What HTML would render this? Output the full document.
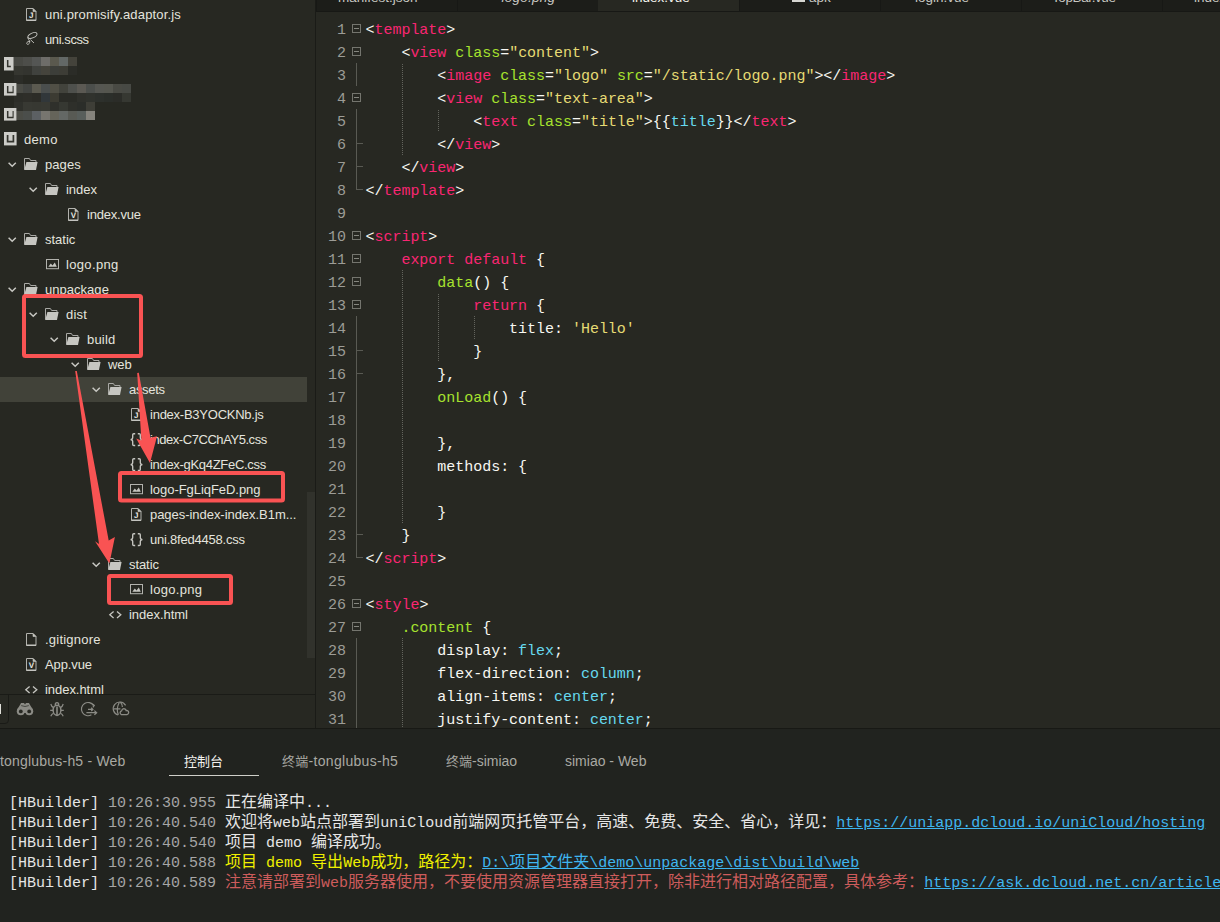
<!DOCTYPE html>
<html lang="zh"><head><meta charset="utf-8"><title>HBuilderX</title>
<style>
*{box-sizing:border-box;margin:0;padding:0}
html,body{width:1220px;height:922px;overflow:hidden;background:#272822}
body{position:relative;font-family:"Liberation Sans","Noto Sans CJK SC",sans-serif;color:#e6e6e0}
svg{position:absolute;overflow:visible}
#side{position:absolute;left:0;top:0;width:315px;height:695px;background:#272822;overflow:hidden}
#divider{position:absolute;left:315px;top:0;width:1px;height:728px;background:#1a1b17}
.row{position:absolute;left:0;width:307px;height:25px;line-height:25px;font-size:13px;color:#e4e4de;white-space:nowrap}
.row.sel{background:#414239}
.row .t{position:absolute;top:0}
#sb{position:absolute;left:307px;top:492px;width:8px;height:166px;background:#31322c}
#tabs{position:absolute;left:316px;top:0;width:904px;height:12px;background:#1c1d19;border-bottom:1px solid #171815;overflow:hidden}
.tab{position:absolute;top:0;height:11px;width:141px;border-left:1px solid #171815;font-size:13.5px;color:#c8c8c2;white-space:nowrap}
.tab span{position:absolute;top:-10px;line-height:16px}
.tab.act{background:#272822;height:12px;color:#f4f4ee;border-left:0}
#editor{position:absolute;left:316px;top:12px;width:904px;height:716px;background:#272822;overflow:hidden}
.ln{position:absolute;left:0;width:904px;height:23px;line-height:23px;font-family:"Liberation Mono",monospace;font-size:15px;color:#f8f8f2;white-space:pre}
.ln .n{position:absolute;left:0;top:2px;width:30px;text-align:right;color:#9c9c96}
.ln .c{position:absolute;left:49.5px;top:2px;letter-spacing:-0.025px}
.k{color:#f92672}.a{color:#a6e22e}.s{color:#e6db74}.b{color:#66d9ef}
.fb{position:absolute;left:36px;top:7px;width:9px;height:9px;border:1px solid #74756e}
.fb:after{content:"";position:absolute;left:1px;top:3px;width:5px;height:1px;background:#85867f}
.fl{position:absolute;left:40px;top:0;width:1px;height:23px;background:#595a53}
.fl.end{height:12px}
.ft{position:absolute;left:40px;top:11px;width:7px;height:1px;background:#595a53}
.ig{position:absolute;width:1px;background:repeating-linear-gradient(to bottom,#63645d 0,#63645d 1px,transparent 1px,transparent 2px)}
#toolbar{position:absolute;left:0;top:694px;width:315px;height:34px;background:#272822;border-top:1px solid #1a1b17}
#ltab{position:absolute;left:-2px;top:-1px;width:11px;height:30px;border:1px solid #1a1b17;border-radius:0 0 4px 0}
#console{position:absolute;left:0;top:728px;width:1220px;height:194px;background:#21231f;border-top:1px solid #181915;overflow:hidden}
.ct{position:absolute;top:22px;height:20px;line-height:20px;font-size:14px;color:#a9a9a3;white-space:nowrap}
.ct .z{font-size:13px}
.log{position:absolute;left:9px;height:20px;line-height:20px;font-family:"Liberation Mono","Noto Sans CJK SC",monospace;font-size:15px;color:#e6e6e6;white-space:pre}
.log .z{font-size:16px}
.log .d{color:#a6a6a6}
.log a{color:#3fb6f0;text-decoration:underline}
.mz{position:absolute;width:9px;height:9px}
</style></head><body>
<div id="side">
<div class="row" style="top:2px"><svg style="left:25.8px;top:6px" width="11" height="13" viewBox="0 0 11 13"><path d="M0.5,0.5H7L10,3.5V12.5H0.5Z" fill="none" stroke="#b2b2ad" stroke-width="1"/><path d="M7,0.5V3.5H10Z" fill="#c6c6c1" stroke="#c6c6c1" stroke-width="0.6"/><path d="M0.5,12.2H10" fill="none" stroke="#c6c6c1" stroke-width="1.4"/><text x="5.3" y="10.2" font-family="Liberation Sans,sans-serif" font-size="8" font-weight="bold" text-anchor="middle" fill="#e6e6e0" text-rendering="geometricPrecision">J</text></svg><span class="t" style="left:45px;letter-spacing:0.167px">uni.promisify.adaptor.js</span></div>
<div class="row" style="top:27px"><svg style="left:25.5px;top:5px" width="12" height="14" viewBox="0 0 12 14"><g fill="none" stroke="#c6c6c1" stroke-width="0.9"><ellipse cx="6.4" cy="3.5" rx="4.9" ry="2.4" transform="rotate(-24 6.4 3.5)"/><path d="M1.9,5.2C1.6,7.4 4.2,8.2 3.6,10.6C3.1,12.6 0.7,13 0.7,11.3C0.7,9.8 2.6,9.2 4.2,9.6M4.4,7.6L8,11"/></g></svg><span class="t" style="left:45px;letter-spacing:-0.409px">uni.scss</span></div>
<div class="row" style="top:52px"></div>
<div class="row" style="top:77px"></div>
<div class="row" style="top:102px"></div>
<div class="row" style="top:127px"><svg style="left:4px;top:5.2px" width="13" height="14" viewBox="0 0 13 14"><rect x="0" y="0" width="12.6" height="13.4" fill="#cdcdc9"/><path d="M3.6,3V9.6H9.4V3" fill="none" stroke="#34352f" stroke-width="1.7"/></svg><span class="t" style="left:24px;letter-spacing:0.292px">demo</span></div>
<div class="row" style="top:152px"><svg style="left:7.700000000000003px;top:10px" width="9" height="6" viewBox="0 0 9 6"><path d="M0.6,0.7L4.2,4.2L7.8,0.7" fill="none" stroke="#c8c8c3" stroke-width="1.5"/></svg><svg style="left:24px;top:6px" width="14" height="12" viewBox="0 0 14 12"><path d="M0.5,11.5V0.5H5.4L6.6,2.5H12V4.5" fill="none" stroke="#a9a9a5" stroke-width="1"/><path d="M2.4,4H13.6L12,12H0.2Z" fill="#c6c6c1"/></svg><span class="t" style="left:45px;letter-spacing:0.076px">pages</span></div>
<div class="row" style="top:177px"><svg style="left:28.700000000000003px;top:10px" width="9" height="6" viewBox="0 0 9 6"><path d="M0.6,0.7L4.2,4.2L7.8,0.7" fill="none" stroke="#c8c8c3" stroke-width="1.5"/></svg><svg style="left:45px;top:6px" width="14" height="12" viewBox="0 0 14 12"><path d="M0.5,11.5V0.5H5.4L6.6,2.5H12V4.5" fill="none" stroke="#a9a9a5" stroke-width="1"/><path d="M2.4,4H13.6L12,12H0.2Z" fill="#c6c6c1"/></svg><span class="t" style="left:66px;letter-spacing:-0.016px">index</span></div>
<div class="row" style="top:202px"><svg style="left:67.8px;top:6px" width="11" height="13" viewBox="0 0 11 13"><path d="M0.5,0.5H7L10,3.5V12.5H0.5Z" fill="none" stroke="#b2b2ad" stroke-width="1"/><path d="M7,0.5V3.5H10Z" fill="#c6c6c1" stroke="#c6c6c1" stroke-width="0.6"/><path d="M0.5,12.2H10" fill="none" stroke="#c6c6c1" stroke-width="1.4"/><text x="5.3" y="10.2" font-family="Liberation Sans,sans-serif" font-size="8" font-weight="bold" text-anchor="middle" fill="#e6e6e0" text-rendering="geometricPrecision">V</text></svg><span class="t" style="left:87px;letter-spacing:-0.195px">index.vue</span></div>
<div class="row" style="top:227px"><svg style="left:7.700000000000003px;top:10px" width="9" height="6" viewBox="0 0 9 6"><path d="M0.6,0.7L4.2,4.2L7.8,0.7" fill="none" stroke="#c8c8c3" stroke-width="1.5"/></svg><svg style="left:24px;top:6px" width="14" height="12" viewBox="0 0 14 12"><path d="M0.5,11.5V0.5H5.4L6.6,2.5H12V4.5" fill="none" stroke="#a9a9a5" stroke-width="1"/><path d="M2.4,4H13.6L12,12H0.2Z" fill="#c6c6c1"/></svg><span class="t" style="left:45px;letter-spacing:-0.007px">static</span></div>
<div class="row" style="top:252px"><svg style="left:45.6px;top:6.8px" width="13" height="11" viewBox="0 0 13 11"><rect x="0.5" y="0.5" width="12" height="9.2" fill="none" stroke="#b2b2ad" stroke-width="1"/><path d="M2.3,7.8L4.8,4.6L6.5,6.4L8.8,3.6L10.8,7.8Z" fill="#c6c6c1"/></svg><span class="t" style="left:66px;letter-spacing:0.339px">logo.png</span></div>
<div class="row" style="top:277px"><svg style="left:7.700000000000003px;top:10px" width="9" height="6" viewBox="0 0 9 6"><path d="M0.6,0.7L4.2,4.2L7.8,0.7" fill="none" stroke="#c8c8c3" stroke-width="1.5"/></svg><svg style="left:24px;top:6px" width="14" height="12" viewBox="0 0 14 12"><path d="M0.5,11.5V0.5H5.4L6.6,2.5H12V4.5" fill="none" stroke="#a9a9a5" stroke-width="1"/><path d="M2.4,4H13.6L12,12H0.2Z" fill="#c6c6c1"/></svg><span class="t" style="left:45px;letter-spacing:0.031px">unpackage</span></div>
<div class="row" style="top:302px"><svg style="left:28.700000000000003px;top:10px" width="9" height="6" viewBox="0 0 9 6"><path d="M0.6,0.7L4.2,4.2L7.8,0.7" fill="none" stroke="#c8c8c3" stroke-width="1.5"/></svg><svg style="left:45px;top:6px" width="14" height="12" viewBox="0 0 14 12"><path d="M0.5,11.5V0.5H5.4L6.6,2.5H12V4.5" fill="none" stroke="#a9a9a5" stroke-width="1"/><path d="M2.4,4H13.6L12,12H0.2Z" fill="#c6c6c1"/></svg><span class="t" style="left:66px;letter-spacing:0.216px">dist</span></div>
<div class="row" style="top:327px"><svg style="left:49.7px;top:10px" width="9" height="6" viewBox="0 0 9 6"><path d="M0.6,0.7L4.2,4.2L7.8,0.7" fill="none" stroke="#c8c8c3" stroke-width="1.5"/></svg><svg style="left:66px;top:6px" width="14" height="12" viewBox="0 0 14 12"><path d="M0.5,11.5V0.5H5.4L6.6,2.5H12V4.5" fill="none" stroke="#a9a9a5" stroke-width="1"/><path d="M2.4,4H13.6L12,12H0.2Z" fill="#c6c6c1"/></svg><span class="t" style="left:87px;letter-spacing:0.186px">build</span></div>
<div class="row" style="top:352px"><svg style="left:70.7px;top:10px" width="9" height="6" viewBox="0 0 9 6"><path d="M0.6,0.7L4.2,4.2L7.8,0.7" fill="none" stroke="#c8c8c3" stroke-width="1.5"/></svg><svg style="left:87px;top:6px" width="14" height="12" viewBox="0 0 14 12"><path d="M0.5,11.5V0.5H5.4L6.6,2.5H12V4.5" fill="none" stroke="#a9a9a5" stroke-width="1"/><path d="M2.4,4H13.6L12,12H0.2Z" fill="#c6c6c1"/></svg><span class="t" style="left:108px;letter-spacing:-0.053px">web</span></div>
<div class="row sel" style="top:377px"><svg style="left:91.7px;top:10px" width="9" height="6" viewBox="0 0 9 6"><path d="M0.6,0.7L4.2,4.2L7.8,0.7" fill="none" stroke="#c8c8c3" stroke-width="1.5"/></svg><svg style="left:108px;top:6px" width="14" height="12" viewBox="0 0 14 12"><path d="M0.5,11.5V0.5H5.4L6.6,2.5H12V4.5" fill="none" stroke="#a9a9a5" stroke-width="1"/><path d="M2.4,4H13.6L12,12H0.2Z" fill="#c6c6c1"/></svg><span class="t" style="left:129px;letter-spacing:-0.313px">assets</span></div>
<div class="row" style="top:402px"><svg style="left:130.8px;top:6px" width="11" height="13" viewBox="0 0 11 13"><path d="M0.5,0.5H7L10,3.5V12.5H0.5Z" fill="none" stroke="#b2b2ad" stroke-width="1"/><path d="M7,0.5V3.5H10Z" fill="#c6c6c1" stroke="#c6c6c1" stroke-width="0.6"/><path d="M0.5,12.2H10" fill="none" stroke="#c6c6c1" stroke-width="1.4"/><text x="5.3" y="10.2" font-family="Liberation Sans,sans-serif" font-size="8" font-weight="bold" text-anchor="middle" fill="#e6e6e0" text-rendering="geometricPrecision">J</text></svg><span class="t" style="left:150px;letter-spacing:-0.246px">index-B3YOCKNb.js</span></div>
<div class="row" style="top:427px"><svg style="left:129.6px;top:5.8px" width="13" height="14" viewBox="0 0 13 14"><path d="M5.2,0.7H3.8Q2.7,0.7 2.7,1.8V4.6Q2.7,6.4 0.6,6.6Q2.7,6.8 2.7,8.6V11.4Q2.7,12.5 3.8,12.5H5.2" fill="none" stroke="#c6c6c1" stroke-width="1.35"/><path d="M7.8,0.7H9.2Q10.3,0.7 10.3,1.8V4.6Q10.3,6.4 12.4,6.6Q10.3,6.8 10.3,8.6V11.4Q10.3,12.5 9.2,12.5H7.8" fill="none" stroke="#c6c6c1" stroke-width="1.35"/></svg><span class="t" style="left:150px;letter-spacing:-0.443px">index-C7CChAY5.css</span></div>
<div class="row" style="top:452px"><svg style="left:129.6px;top:5.8px" width="13" height="14" viewBox="0 0 13 14"><path d="M5.2,0.7H3.8Q2.7,0.7 2.7,1.8V4.6Q2.7,6.4 0.6,6.6Q2.7,6.8 2.7,8.6V11.4Q2.7,12.5 3.8,12.5H5.2" fill="none" stroke="#c6c6c1" stroke-width="1.35"/><path d="M7.8,0.7H9.2Q10.3,0.7 10.3,1.8V4.6Q10.3,6.4 12.4,6.6Q10.3,6.8 10.3,8.6V11.4Q10.3,12.5 9.2,12.5H7.8" fill="none" stroke="#c6c6c1" stroke-width="1.35"/></svg><span class="t" style="left:150px;letter-spacing:-0.305px">index-gKq4ZFeC.css</span></div>
<div class="row" style="top:477px"><svg style="left:129.6px;top:6.8px" width="13" height="11" viewBox="0 0 13 11"><rect x="0.5" y="0.5" width="12" height="9.2" fill="none" stroke="#b2b2ad" stroke-width="1"/><path d="M2.3,7.8L4.8,4.6L6.5,6.4L8.8,3.6L10.8,7.8Z" fill="#c6c6c1"/></svg><span class="t" style="left:150px;letter-spacing:-0.047px">logo-FgLiqFeD.png</span></div>
<div class="row" style="top:502px"><svg style="left:130.8px;top:6px" width="11" height="13" viewBox="0 0 11 13"><path d="M0.5,0.5H7L10,3.5V12.5H0.5Z" fill="none" stroke="#b2b2ad" stroke-width="1"/><path d="M7,0.5V3.5H10Z" fill="#c6c6c1" stroke="#c6c6c1" stroke-width="0.6"/><path d="M0.5,12.2H10" fill="none" stroke="#c6c6c1" stroke-width="1.4"/><text x="5.3" y="10.2" font-family="Liberation Sans,sans-serif" font-size="8" font-weight="bold" text-anchor="middle" fill="#e6e6e0" text-rendering="geometricPrecision">J</text></svg><span class="t" style="left:150px;letter-spacing:-0.043px">pages-index-index.B1m...</span></div>
<div class="row" style="top:527px"><svg style="left:129.6px;top:5.8px" width="13" height="14" viewBox="0 0 13 14"><path d="M5.2,0.7H3.8Q2.7,0.7 2.7,1.8V4.6Q2.7,6.4 0.6,6.6Q2.7,6.8 2.7,8.6V11.4Q2.7,12.5 3.8,12.5H5.2" fill="none" stroke="#c6c6c1" stroke-width="1.35"/><path d="M7.8,0.7H9.2Q10.3,0.7 10.3,1.8V4.6Q10.3,6.4 12.4,6.6Q10.3,6.8 10.3,8.6V11.4Q10.3,12.5 9.2,12.5H7.8" fill="none" stroke="#c6c6c1" stroke-width="1.35"/></svg><span class="t" style="left:150px;letter-spacing:-0.219px">uni.8fed4458.css</span></div>
<div class="row" style="top:552px"><svg style="left:91.7px;top:10px" width="9" height="6" viewBox="0 0 9 6"><path d="M0.6,0.7L4.2,4.2L7.8,0.7" fill="none" stroke="#c8c8c3" stroke-width="1.5"/></svg><svg style="left:108px;top:6px" width="14" height="12" viewBox="0 0 14 12"><path d="M0.5,11.5V0.5H5.4L6.6,2.5H12V4.5" fill="none" stroke="#a9a9a5" stroke-width="1"/><path d="M2.4,4H13.6L12,12H0.2Z" fill="#c6c6c1"/></svg><span class="t" style="left:129px;letter-spacing:-0.074px">static</span></div>
<div class="row" style="top:577px"><svg style="left:129.6px;top:6.8px" width="13" height="11" viewBox="0 0 13 11"><rect x="0.5" y="0.5" width="12" height="9.2" fill="none" stroke="#b2b2ad" stroke-width="1"/><path d="M2.3,7.8L4.8,4.6L6.5,6.4L8.8,3.6L10.8,7.8Z" fill="#c6c6c1"/></svg><span class="t" style="left:150px;letter-spacing:0.301px">logo.png</span></div>
<div class="row" style="top:602px"><svg style="left:108.6px;top:9px" width="13" height="8" viewBox="0 0 13 8"><path d="M4.6,0.6L0.8,3.8L4.6,7" fill="none" stroke="#c6c6c1" stroke-width="1.3"/><path d="M8,0.6L11.8,3.8L8,7" fill="none" stroke="#c6c6c1" stroke-width="1.3"/></svg><span class="t" style="left:129px;letter-spacing:-0.035px">index.html</span></div>
<div class="row" style="top:627px"><svg style="left:25.8px;top:6px" width="11" height="13" viewBox="0 0 11 13"><path d="M0.5,0.5H7L10,3.5V12.5H0.5Z" fill="none" stroke="#b2b2ad" stroke-width="1"/><path d="M7,0.5V3.5H10Z" fill="#c6c6c1" stroke="#c6c6c1" stroke-width="0.6"/><path d="M0.5,12.2H10" fill="none" stroke="#c6c6c1" stroke-width="1.4"/></svg><span class="t" style="left:45px;letter-spacing:0.222px">.gitignore</span></div>
<div class="row" style="top:652px"><svg style="left:25.8px;top:6px" width="11" height="13" viewBox="0 0 11 13"><path d="M0.5,0.5H7L10,3.5V12.5H0.5Z" fill="none" stroke="#b2b2ad" stroke-width="1"/><path d="M7,0.5V3.5H10Z" fill="#c6c6c1" stroke="#c6c6c1" stroke-width="0.6"/><path d="M0.5,12.2H10" fill="none" stroke="#c6c6c1" stroke-width="1.4"/><text x="5.3" y="10.2" font-family="Liberation Sans,sans-serif" font-size="8" font-weight="bold" text-anchor="middle" fill="#e6e6e0" text-rendering="geometricPrecision">V</text></svg><span class="t" style="left:45px;letter-spacing:-0.115px">App.vue</span></div>
<div class="row" style="top:677px"><svg style="left:24.6px;top:9px" width="13" height="8" viewBox="0 0 13 8"><path d="M4.6,0.6L0.8,3.8L4.6,7" fill="none" stroke="#c6c6c1" stroke-width="1.3"/><path d="M8,0.6L11.8,3.8L8,7" fill="none" stroke="#c6c6c1" stroke-width="1.3"/></svg><span class="t" style="left:45px;letter-spacing:-0.045px">index.html</span></div>
<div class="mz" style="left:14px;top:57px;background:#484944"></div><div class="mz" style="left:23px;top:57px;background:#4d4e4a"></div><div class="mz" style="left:32px;top:57px;background:#545654"></div><div class="mz" style="left:41px;top:57px;background:#6e6d69"></div><div class="mz" style="left:50px;top:57px;background:#5a594e"></div><div class="mz" style="left:59px;top:57px;background:#636866"></div><div class="mz" style="left:68px;top:57px;background:#44433b"></div><div class="mz" style="left:14px;top:66px;background:#353630"></div><div class="mz" style="left:23px;top:66px;background:#33342f"></div><div class="mz" style="left:32px;top:66px;background:#40423e"></div><div class="mz" style="left:41px;top:66px;background:#45443c"></div><div class="mz" style="left:50px;top:66px;background:#3c3e39"></div><div class="mz" style="left:59px;top:66px;background:#3d3d36"></div><div class="mz" style="left:68px;top:66px;background:#2b2c27"></div><div class="mz" style="left:14px;top:75px;background:#2b2c27"></div><div class="mz" style="left:14px;top:84px;background:#4a4b45"></div><div class="mz" style="left:23px;top:84px;background:#424441"></div><div class="mz" style="left:32px;top:84px;background:#5b5a50"></div><div class="mz" style="left:41px;top:84px;background:#4a4e4d"></div><div class="mz" style="left:50px;top:84px;background:#504f45"></div><div class="mz" style="left:59px;top:84px;background:#42433c"></div><div class="mz" style="left:68px;top:84px;background:#4e504c"></div><div class="mz" style="left:77px;top:84px;background:#5b5953"></div><div class="mz" style="left:86px;top:84px;background:#4b4e4b"></div><div class="mz" style="left:95px;top:84px;background:#555651"></div><div class="mz" style="left:104px;top:84px;background:#55564f"></div><div class="mz" style="left:113px;top:84px;background:#494a44"></div><div class="mz" style="left:122px;top:84px;background:#474944"></div><div class="mz" style="left:14px;top:93px;background:#2c2d28"></div><div class="mz" style="left:23px;top:93px;background:#2e2e29"></div><div class="mz" style="left:32px;top:93px;background:#2c2c27"></div><div class="mz" style="left:41px;top:93px;background:#31373a"></div><div class="mz" style="left:50px;top:93px;background:#3c3b32"></div><div class="mz" style="left:59px;top:93px;background:#2a2b26"></div><div class="mz" style="left:68px;top:93px;background:#2a2b26"></div><div class="mz" style="left:77px;top:93px;background:#2f302b"></div><div class="mz" style="left:86px;top:93px;background:#30322d"></div><div class="mz" style="left:95px;top:93px;background:#2d302c"></div><div class="mz" style="left:104px;top:93px;background:#2b2e2a"></div><div class="mz" style="left:113px;top:93px;background:#2b2c28"></div><div class="mz" style="left:122px;top:93px;background:#363832"></div><div class="mz" style="left:14px;top:102px;background:#2f302b"></div><div class="mz" style="left:23px;top:102px;background:#383933"></div><div class="mz" style="left:32px;top:102px;background:#373832"></div><div class="mz" style="left:41px;top:102px;background:#383933"></div><div class="mz" style="left:50px;top:102px;background:#2f302b"></div><div class="mz" style="left:59px;top:102px;background:#363832"></div><div class="mz" style="left:68px;top:102px;background:#2e2f2a"></div><div class="mz" style="left:77px;top:102px;background:#2b2d29"></div><div class="mz" style="left:86px;top:102px;background:#3e3e37"></div><div class="mz" style="left:14px;top:111px;background:#4b4c46"></div><div class="mz" style="left:23px;top:111px;background:#4b4e4b"></div><div class="mz" style="left:32px;top:111px;background:#5c6063"></div><div class="mz" style="left:41px;top:111px;background:#77756f"></div><div class="mz" style="left:50px;top:111px;background:#65645a"></div><div class="mz" style="left:59px;top:111px;background:#646865"></div><div class="mz" style="left:68px;top:111px;background:#585a54"></div><div class="mz" style="left:77px;top:111px;background:#585e5b"></div><div class="mz" style="left:86px;top:111px;background:#85837c"></div><svg style="left:4px;top:57px" width="13" height="14" viewBox="0 0 13 14"><rect width="9.6" height="13.5" fill="#cdcdc9"/><path d="M3.6,3V9.6H9.4V3" fill="none" stroke="#34352f" stroke-width="1.7" clip-path="inset(0 3.4000000000000004px 0 0)"/></svg><svg style="left:4px;top:83px" width="13" height="14" viewBox="0 0 13 14"><rect width="12.4" height="12.6" fill="#cdcdc9"/><path d="M3.6,3V9.6H9.4V3" fill="none" stroke="#34352f" stroke-width="1.7" clip-path="inset(0 0.5999999999999996px 0 0)"/></svg><svg style="left:4px;top:108px" width="13" height="14" viewBox="0 0 13 14"><rect width="12.4" height="12.6" fill="#cdcdc9"/><path d="M3.6,3V9.6H9.4V3" fill="none" stroke="#34352f" stroke-width="1.7" clip-path="inset(0 0.5999999999999996px 0 0)"/></svg>
<div id="sb"></div>
</div>
<div id="toolbar"><div id="ltab"></div><i style="position:absolute;left:0;top:9px;width:1px;height:10px;background:#e0e0da"></i></div>
<svg style="left:0;top:0" width="315" height="728" viewBox="0 0 315 728"><g fill="#8b8b85"><circle cx="20.8" cy="711.3" r="4"/><circle cx="29.2" cy="711.3" r="4"/><path d="M17.2,709.6L20.4,704.2L21,703H24L25,704.4L26,703H29L29.6,704.2L32.8,709.6L29,713H21Z"/></g><circle cx="20.8" cy="711.4" r="1.9" fill="#272822"/><circle cx="29.2" cy="711.4" r="1.9" fill="#272822"/><path d="M24.3,713.2H25.7V715.4H24.3Z" fill="#272822"/><path d="M21.2,705.6Q25,707.4 28.8,705.6" fill="none" stroke="#272822" stroke-width="0.7"/><g fill="none" stroke="#8b8b85" stroke-width="1.5"><ellipse cx="57" cy="710.3" rx="3.9" ry="5.1"/><path d="M57,706.4V715.2" stroke-width="1.6"/><path d="M55.2,705.2Q55.2,702.6 57,702.6Q58.8,702.6 58.8,705.2" stroke-width="1.3"/><path d="M53.6,707.6Q51.4,706.6 50.8,704M60.4,707.6Q62.6,706.6 63.2,704M53.1,710.4H50.2M60.9,710.4H63.8M53.6,713.2Q51.6,714 50.8,716.2M60.4,713.2Q62.4,714 63.2,716.2" stroke-width="1.2"/></g><g fill="none" stroke="#8b8b85" stroke-width="1.2"><path d="M93.6,705.6A6.6,6.6 0 1 0 91.4,714.8"/><path d="M92.4,703.9L94.3,705.4L92.9,707.4"/><path d="M88,709.4H92.8M91.2,707.8L92.9,709.4L91.2,711"/><path d="M86.4,712.7H96.4M94.4,710.6L96.7,712.7L94.4,714.8"/></g><g fill="none" stroke="#8b8b85" stroke-width="1.2"><path d="M125.6,705.4A6.6,6.6 0 1 0 118.2,715"/><path d="M113.4,708.8H120.4M119.4,702.2Q115.8,708.6 118.4,714.8M120.4,702.2Q122.2,704.2 122.4,707"/><path d="M121.4,714.6H127A2.1,2.1 0 0 0 127.4,710.6Q126.6,710.4 126.2,710.6Q125.4,708.6 123.8,708.6Q122,708.8 121.6,710.8A2,2 0 0 0 121.4,714.6Z" fill="#272822" stroke-width="1.3"/></g></svg>
<svg style="left:0;top:0" width="315" height="700" viewBox="0 0 315 700"><rect x="24" y="296" width="117" height="60" rx="1.5" fill="none" stroke="#f95353" stroke-width="4"/><rect x="120" y="473" width="163" height="27.5" rx="1.5" fill="none" stroke="#f95353" stroke-width="4"/><rect x="109" y="576" width="122" height="27" rx="1.5" fill="none" stroke="#f95353" stroke-width="4"/><polygon points="137.2,372.9 141.4,440.5 136.2,438.4 150,463 157,436.2 150.5,437.7 138.8,372.7" fill="#f95353"/><polygon points="75.2,371.1 99,544 95,541.3 109.4,563.4 114.9,536.9 108.7,540.5 76.8,370.9" fill="#f95353"/></svg>
<div id="divider"></div>
<div id="tabs">
<div class="tab" style="left:0px"><span style="left:21px">manifest.json</span></div>
<div class="tab" style="left:141px"><span style="left:43.5px;font-style:italic;letter-spacing:0.25px">logo.png</span></div>
<div class="tab act" style="left:282px"><span style="left:34px">index.vue</span></div>
<div class="tab" style="left:423px"><i style="position:absolute;left:52px;top:-11px;width:13px;height:13px;background:#d6d6d2"></i><span style="left:69px">apk</span></div>
<div class="tab" style="left:564px"><span style="left:34px">login.vue</span></div>
<div class="tab" style="left:705px"><span style="left:30px;letter-spacing:-0.4px">TopBar.vue</span></div>
<div class="tab" style="left:846px"><span style="left:31px">index.vue</span></div>
</div>
<div id="editor">
<div class="ln" style="top:5px"><i class="fb"></i><span class="n">1</span><span class="c">&lt;<span class="k">template</span>&gt;</span></div>
<div class="ln" style="top:28px"><i class="fb"></i><span class="n">2</span><span class="c">    &lt;<span class="k">view</span> <span class="a">class</span>=<span class="s">"content"</span>&gt;</span></div>
<div class="ln" style="top:51px"><i class="fl"></i><span class="n">3</span><span class="c">        &lt;<span class="k">image</span> <span class="a">class</span>=<span class="s">"logo"</span> <span class="a">src</span>=<span class="s">"/static/logo.png"</span>&gt;&lt;/<span class="k">image</span>&gt;</span></div>
<div class="ln" style="top:74px"><i class="fb"></i><span class="n">4</span><span class="c">        &lt;<span class="k">view</span> <span class="a">class</span>=<span class="s">"text-area"</span>&gt;</span></div>
<div class="ln" style="top:97px"><i class="fl"></i><span class="n">5</span><span class="c">            &lt;<span class="k">text</span> <span class="a">class</span>=<span class="s">"title"</span>&gt;{{<span class="b">title</span>}}&lt;/<span class="k">text</span>&gt;</span></div>
<div class="ln" style="top:120px"><i class="fl"></i><i class="ft"></i><span class="n">6</span><span class="c">        &lt;/<span class="k">view</span>&gt;</span></div>
<div class="ln" style="top:143px"><i class="fl"></i><i class="ft"></i><span class="n">7</span><span class="c">    &lt;/<span class="k">view</span>&gt;</span></div>
<div class="ln" style="top:166px"><i class="fl end"></i><i class="ft"></i><span class="n">8</span><span class="c">&lt;/<span class="k">template</span>&gt;</span></div>
<div class="ln" style="top:189px"><span class="n">9</span><span class="c"></span></div>
<div class="ln" style="top:212px"><i class="fb"></i><span class="n">10</span><span class="c">&lt;<span class="k">script</span>&gt;</span></div>
<div class="ln" style="top:235px"><i class="fb"></i><span class="n">11</span><span class="c">    <span class="k">export</span> <span class="k">default</span> {</span></div>
<div class="ln" style="top:258px"><i class="fb"></i><span class="n">12</span><span class="c">        <span class="a">data</span>() {</span></div>
<div class="ln" style="top:281px"><i class="fb"></i><span class="n">13</span><span class="c">            <span class="k">return</span> {</span></div>
<div class="ln" style="top:304px"><i class="fl"></i><span class="n">14</span><span class="c">                title: <span class="s">'Hello'</span></span></div>
<div class="ln" style="top:327px"><i class="fl"></i><i class="ft"></i><span class="n">15</span><span class="c">            }</span></div>
<div class="ln" style="top:350px"><i class="fl"></i><i class="ft"></i><span class="n">16</span><span class="c">        },</span></div>
<div class="ln" style="top:373px"><i class="fl"></i><span class="n">17</span><span class="c">        <span class="a">onLoad</span>() {</span></div>
<div class="ln" style="top:396px"><i class="fl"></i><span class="n">18</span><span class="c"></span></div>
<div class="ln" style="top:419px"><i class="fl"></i><span class="n">19</span><span class="c">        },</span></div>
<div class="ln" style="top:442px"><i class="fl"></i><span class="n">20</span><span class="c">        methods: {</span></div>
<div class="ln" style="top:465px"><i class="fl"></i><span class="n">21</span><span class="c"></span></div>
<div class="ln" style="top:488px"><i class="fl"></i><span class="n">22</span><span class="c">        }</span></div>
<div class="ln" style="top:511px"><i class="fl"></i><i class="ft"></i><span class="n">23</span><span class="c">    }</span></div>
<div class="ln" style="top:534px"><i class="fl end"></i><i class="ft"></i><span class="n">24</span><span class="c">&lt;/<span class="k">script</span>&gt;</span></div>
<div class="ln" style="top:557px"><span class="n">25</span><span class="c"></span></div>
<div class="ln" style="top:580px"><i class="fb"></i><span class="n">26</span><span class="c">&lt;<span class="k">style</span>&gt;</span></div>
<div class="ln" style="top:603px"><i class="fb"></i><span class="n">27</span><span class="c">    <span class="a">.content</span> {</span></div>
<div class="ln" style="top:626px"><i class="fl"></i><span class="n">28</span><span class="c">        display: <span class="b">flex</span>;</span></div>
<div class="ln" style="top:649px"><i class="fl"></i><span class="n">29</span><span class="c">        flex-direction: <span class="b">column</span>;</span></div>
<div class="ln" style="top:672px"><i class="fl"></i><span class="n">30</span><span class="c">        align-items: <span class="b">center</span>;</span></div>
<div class="ln" style="top:695px"><i class="fl"></i><span class="n">31</span><span class="c">        justify-content: <span class="b">center</span>;</span></div>
<i class="ig" style="left:86px;top:52px;height:91px"></i>
<i class="ig" style="left:86px;top:258px;height:253px"></i>
<i class="ig" style="left:86px;top:626px;height:92px"></i>
<i class="ig" style="left:122px;top:98px;height:22px"></i>
<i class="ig" style="left:122px;top:282px;height:68px"></i>
<i class="ig" style="left:158px;top:304px;height:23px"></i>
</div>
<div id="console">
<div class="ct" style="left:0px;letter-spacing:0.2px">tonglubus-h5 - Web</div>
<div class="ct" style="left:184px;letter-spacing:0px;color:#f2f2ee"><span class="z">控制台</span></div>
<div class="ct" style="left:282px;letter-spacing:0.3px"><span class="z">终端</span>-tonglubus-h5</div>
<div class="ct" style="left:446px;letter-spacing:0px"><span class="z">终端</span>-simiao</div>
<div class="ct" style="left:565px;letter-spacing:0px">simiao - Web</div>
<div style="position:absolute;left:169px;top:46px;width:90px;height:1px;background:#cfcfc9"></div>
<div class="log" style="top:64px">[HBuilder] <span class="d">10:26:30.955</span> <span class="z">正在编译中</span>...</div>
<div class="log" style="top:84px">[HBuilder] <span class="d">10:26:40.540</span> <span class="z">欢迎将</span>web<span class="z">站点部署到</span>uniCloud<span class="z">前端网页托管平台，高速、免费、安全、省心，详见：</span><a>https://uniapp.dcloud.io/uniCloud/hosting</a></div>
<div class="log" style="top:104px">[HBuilder] <span class="d">10:26:40.540</span> <span class="z">项目</span> demo <span class="z">编译成功。</span></div>
<div class="log" style="top:124px">[HBuilder] <span class="d">10:26:40.588</span> <span style="color:#f0f000"><span class="z">项目</span> demo <span class="z">导出</span>Web<span class="z">成功，路径为：</span></span><a>D:\<span class="z">项目文件夹</span>\demo\unpackage\dist\build\web</a></div>
<div class="log" style="top:144px">[HBuilder] <span class="d">10:26:40.589</span> <span style="color:#cd5c5c"><span class="z">注意请部署到</span>web<span class="z">服务器使用，不要使用资源管理器直接打开，除非进行相对路径配置，具体参考：</span></span><a>https://ask.dcloud.net.cn/article/40172</a></div>
</div>
</body></html>
